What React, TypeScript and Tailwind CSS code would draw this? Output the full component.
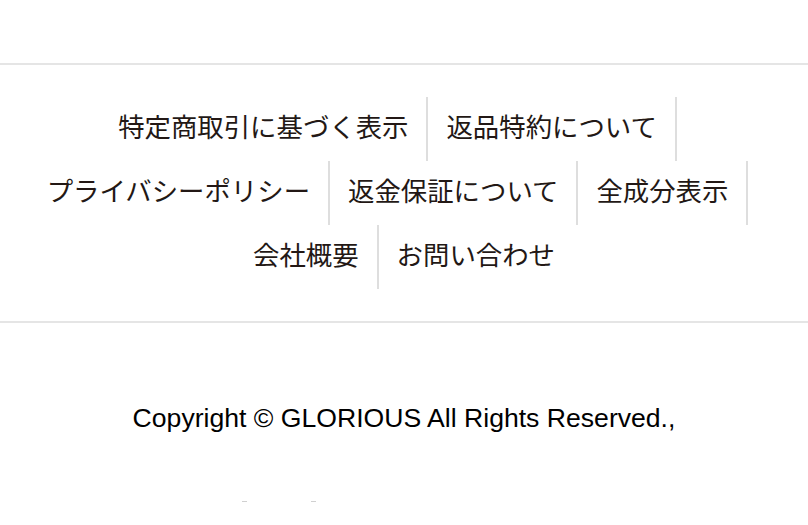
const links = [
  "特定商取引に基づく表示",
  "返品特約について",
  "プライバシーポリシー",
  "返金保証について",
  "全成分表示",
  "会社概要",
  "お問い合わせ",
];

export default function App() {
  return (
    <div className="w-[808px] h-[525px] bg-white overflow-hidden">
      <div className="h-[63px]" />
      <nav className="border-t-2 border-b-2 border-[#e5e5e5] py-8">
        <ul className="flex flex-wrap justify-center pr-[31px]">
          {links.map((label, i) => (
            <li
              key={label}
              className={
                i === links.length - 1
                  ? "h-16 flex items-center px-[18px] pb-[5px] mr-[-31px] text-[26.4px] text-[#231815] font-['Noto_Sans_CJK_JP',sans-serif] leading-none"
                  : "h-16 flex items-center px-[18px] pb-[5px] border-r-2 border-[#dedede] text-[26.4px] text-[#231815] font-['Noto_Sans_CJK_JP',sans-serif] leading-none"
              }
            >
              <a href="#">{label}</a>
            </li>
          ))}
        </ul>
      </nav>
      <p className="mt-[75px] text-center text-[26.6px] leading-[40px] text-black font-['Liberation_Sans',Arial,sans-serif]">
        Copyright © GLORIOUS All Rights Reserved.,
      </p>
      <div className="mt-[63px] flex">
        <span className="ml-[242px] w-[5px] h-px bg-[#d0d0d0]" />
        <span className="ml-[64px] w-[5px] h-px bg-[#d0d0d0]" />
      </div>
    </div>
  );
}
